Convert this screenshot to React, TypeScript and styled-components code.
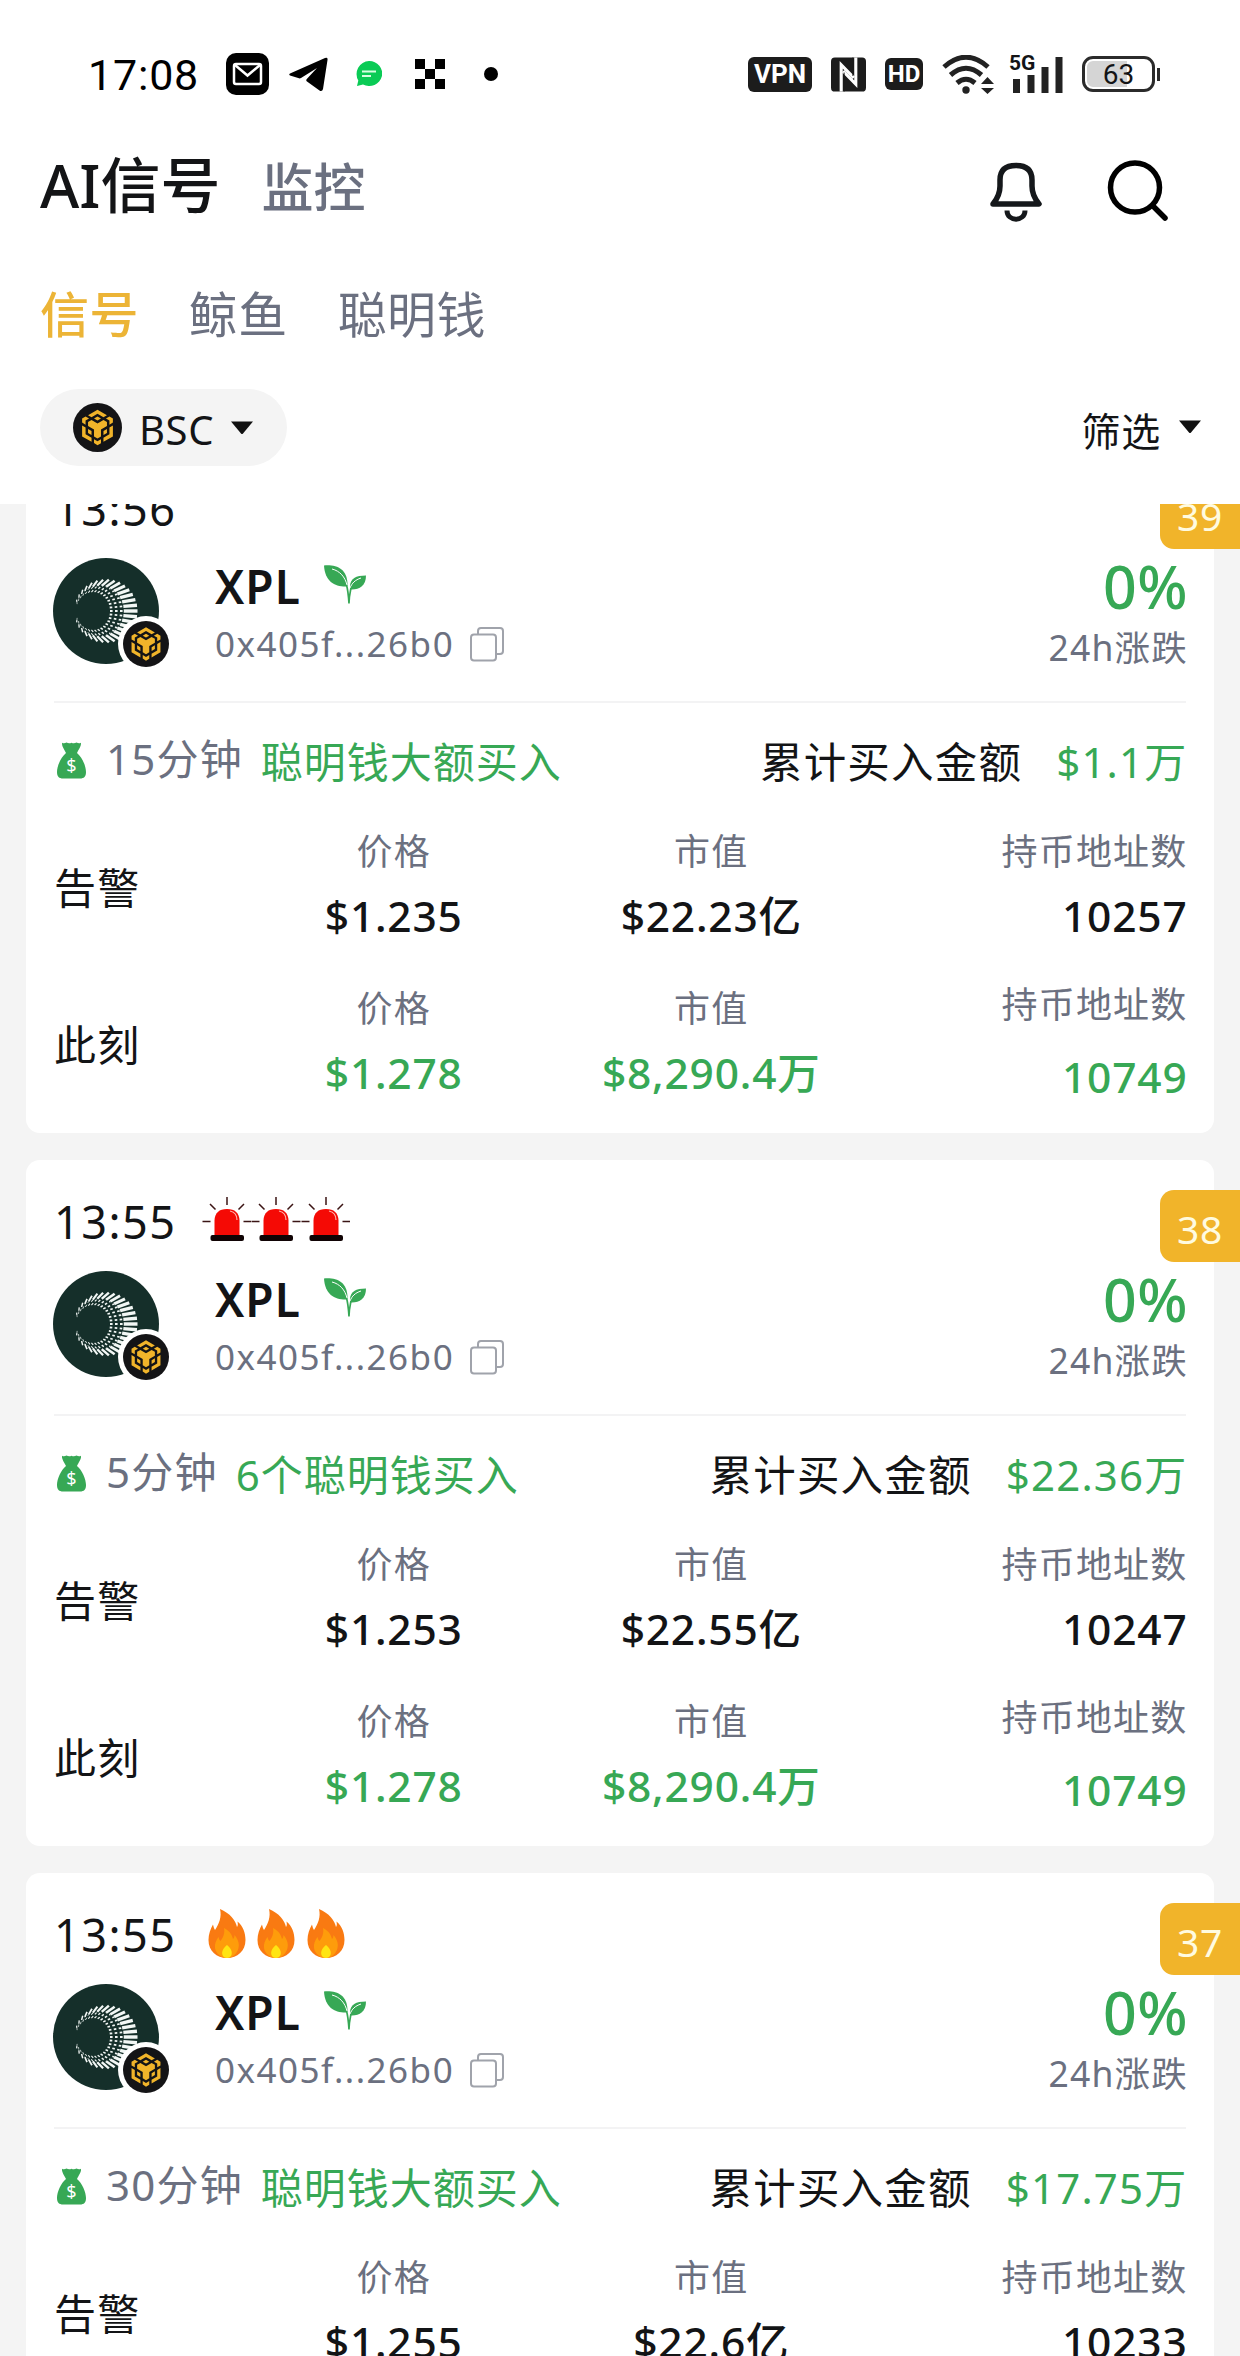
import styled, { createGlobalStyle } from 'styled-components';

const GlobalStyle = createGlobalStyle`
  * {
    box-sizing: border-box;
  }

  body {
    margin: 0;
    background: #fff;
    color: #131416;
    font-family: 'Noto Sans', 'Noto Sans CJK SC', sans-serif;
    letter-spacing: 1.2px;
  }
`;

const green = '#37a855';
const gray = '#6b7080';
const yellow = '#f1b42a';

const Screen = styled.div`
  display: flex;
  flex-direction: column;
  width: 1240px;
  height: 2356px;
  overflow: hidden;
`;

const StatusBar = styled.div`
  display: flex;
  justify-content: space-between;
  height: 150px;
  padding: 48px 80px 0 88px;
`;

const StatusGroup = styled.div`
  display: flex;
  align-items: center;
  height: 52px;
`;

const Clock = styled.span`
  width: 138px;
  padding-top: 2px;
  font-family: Roboto, sans-serif;
  font-size: 43px;
  line-height: 52px;
  letter-spacing: 0.8px;
  color: #000;
`;

const StatusIcon = styled.svg<{ $gap?: number }>`
  flex: none;
  margin-left: ${(props) => props.$gap ?? 0}px;
`;

const Tag = styled.span<{ $width: number; $height: number; $size: number; $gap?: number }>`
  display: flex;
  align-items: center;
  justify-content: center;
  width: ${(props) => props.$width}px;
  height: ${(props) => props.$height}px;
  margin-left: ${(props) => props.$gap ?? 0}px;
  border-radius: 6px;
  background: #1c1c1c;
  color: #fff;
  font-family: Roboto, sans-serif;
  font-size: ${(props) => props.$size}px;
  font-weight: 700;
  letter-spacing: 0;
`;

const Signal = styled.div`
  position: relative;
  width: 54px;
  height: 38px;
  margin-left: 14px;
`;

const SignalLabel = styled.span`
  position: absolute;
  top: -5px;
  left: 0;
  font-family: Roboto, sans-serif;
  font-size: 21px;
  font-weight: 700;
  line-height: 26px;
  letter-spacing: 0;
`;

const Battery = styled.div`
  display: flex;
  align-items: center;
  margin-left: 19px;
`;

const BatteryBody = styled.div`
  width: 73px;
  height: 36px;
  border: 3px solid #2b2b2b;
  border-radius: 11px;
  background: linear-gradient(90deg, #d5d5d5 63%, #fff 63%);
  box-shadow: inset 0 0 0 2px #fff;
  font-family: Roboto, sans-serif;
  font-size: 28px;
  line-height: 31px;
  letter-spacing: 0;
  text-align: center;
`;

const BatteryTip = styled.div`
  width: 3px;
  height: 13px;
  margin-left: 2px;
  background: #2b2b2b;
`;

const Header = styled.header`
  display: flex;
  justify-content: space-between;
  height: 120px;
  padding: 0 71px 0 40px;
`;

const Titles = styled.div`
  display: flex;
  gap: 41px;
`;

const Title = styled.h1<{ $active?: boolean }>`
  margin: 0;
  font-size: ${(props) => (props.$active ? 60 : 52)}px;
  font-weight: 500;
  line-height: ${(props) => (props.$active ? 71 : 73)}px;
  letter-spacing: 0;
  color: ${(props) => (props.$active ? '#131416' : gray)};
`;

const HeaderActions = styled.div`
  display: flex;
  align-items: flex-start;
  gap: 65px;
  padding-top: 10px;
`;

const Tabs = styled.nav`
  display: flex;
  gap: 50px;
  height: 119px;
  padding: 8px 40px 0;
`;

const Tab = styled.span<{ $active?: boolean }>`
  font-size: 49px;
  font-weight: ${(props) => (props.$active ? 500 : 400)};
  line-height: 72px;
  letter-spacing: 0.4px;
  color: ${(props) => (props.$active ? '#ecb436' : gray)};
`;

const Filters = styled.div`
  display: flex;
  justify-content: space-between;
  align-items: center;
  height: 77px;
  padding: 0 38px 0 40px;
  margin-bottom: 38px;
`;

const ChainChip = styled.div`
  display: flex;
  align-items: center;
  width: 247px;
  height: 77px;
  padding-left: 33px;
  border-radius: 39px;
  background: #f4f4f4;
  font-size: 40px;
  letter-spacing: 0.6px;
`;

const ChainName = styled.span`
  margin: 4px 16px 0 17px;
`;

const FilterButton = styled.div`
  display: flex;
  align-items: center;
  gap: 17px;
  padding-top: 2px;
  font-size: 39px;
  letter-spacing: 0.8px;

  svg {
    margin-top: -4px;
  }
`;

const List = styled.main`
  flex: 1;
  min-height: 0;
  overflow: hidden;
  background: #f4f4f4;
`;

/* the list is scrolled a little, so the first card starts above its edge */
const Scrolled = styled.div`
  display: flex;
  flex-direction: column;
  gap: 27px;
  margin-top: -57px;
  padding: 0 26px;
`;

const CardBox = styled.article`
  position: relative;
  flex: none;
  height: 686px;
  padding: 31px 28px 0;
  border-radius: 14px;
  background: #fff;
`;

const Rank = styled.div`
  position: absolute;
  top: 30px;
  right: -26px;
  width: 80px;
  height: 72px;
  border-radius: 14px 0 0 14px;
  background: ${yellow};
  color: #fffbe0;
  font-size: 39px;
  line-height: 77px;
  letter-spacing: 0.6px;
  text-align: center;
`;

const TimeRow = styled.div`
  display: flex;
  height: 60px;
  font-size: 45px;
  line-height: 61px;
  letter-spacing: 1.5px;
`;

const Emojis = styled.div`
  display: flex;
  margin: 5px 0 0 25px;
`;

const TokenRow = styled.div`
  display: flex;
  height: 165px;
  padding-top: 20px;
  border-bottom: 2px solid #f3f3f4;
`;

const Avatar = styled.div`
  position: relative;
  width: 106px;
  height: 106px;
  margin-left: -1px;
`;

const ChainBadge = styled.div`
  position: absolute;
  top: 58px;
  left: 65px;
  display: flex;
  padding: 5px;
  border-radius: 50%;
  background: #fff;
`;

const Names = styled.div`
  flex: 1;
  padding-left: 56px;
`;

const Symbol = styled.div`
  display: flex;
  gap: 23px;
  height: 56px;
  font-size: 46px;
  font-weight: 600;
  line-height: 57px;
  letter-spacing: 1px;

  svg {
    margin-top: 7px;
  }
`;

const Address = styled.div`
  display: flex;
  gap: 16px;
  margin-top: 8px;
  font-size: 35px;
  line-height: 44px;
  letter-spacing: 1.5px;
  color: ${gray};

  svg {
    margin-top: 5px;
  }
`;

/* pulled right by its own trailing letter spacing */
const Change = styled.div`
  margin: -4px -2px 0 0;
  text-align: right;
  color: ${gray};
  font-size: 35.5px;
  line-height: 45px;
`;

const Percent = styled.div`
  margin-bottom: 7px;
  color: ${green};
  font-size: 59px;
  font-weight: 500;
  line-height: 64px;
  letter-spacing: 0.5px;
`;

const AlertRow = styled.div`
  display: flex;
  height: 129px;
  padding-top: 31px;
  margin-right: -1.5px;
  font-size: 42px;
  line-height: 50px;

  svg {
    margin: 8px 0 0 3px;
  }
`;

const Period = styled.span`
  margin-left: 20px;
  color: ${gray};
`;

const AlertText = styled.span`
  flex: 1;
  margin-left: 18px;
  padding-top: 3px;
  letter-spacing: 1px;
  color: ${green};
`;

const AmountLabel = styled.span`
  padding-top: 3px;
  font-size: 42.5px;
`;

const Amount = styled.span`
  margin-left: 34px;
  padding-top: 3px;
  color: ${green};
`;

const Metrics = styled.div`
  display: grid;
  grid-template-columns: 181px repeat(3, 1fr);
  height: 157px;
  margin-right: -1.5px;
`;

const RowName = styled.div`
  height: 113px;
  font-size: 42px;
  line-height: 112px;
`;

const Metric = styled.div<{ $last?: boolean; $loose?: boolean }>`
  display: flex;
  flex-direction: column;
  gap: ${(props) => (props.$loose ? 25 : 17)}px;
  margin-top: ${(props) => (props.$loose ? -4 : 0)}px;
  text-align: ${(props) => (props.$last ? 'right' : 'center')};
`;

const MetricLabel = styled.span`
  color: ${gray};
  font-size: 36px;
  line-height: 40px;
`;

const MetricValue = styled.span<{ $up?: boolean }>`
  color: ${(props) => (props.$up ? green : '#131416')};
  font-size: 42.5px;
  font-weight: 500;
  line-height: 54px;
  letter-spacing: 0.8px;
`;

function ChainLogo({ size }: { size: number }) {
  return (
    <svg width={size} height={size} viewBox="-4.5 -4.5 33 33">
      <circle cx="12" cy="12" r="16.5" fill="#141416" />
      <path
        fill={yellow}
        d="M5.631 3.676 12.001 0l6.367 3.676-2.34 1.358L12 2.716 7.972 5.034l-2.34-1.358Zm12.737 4.636-2.34-1.358L12 9.272 7.972 6.954l-2.34 1.358v2.716l4.026 2.318v4.636L12 19.341l2.341-1.359v-4.636l4.027-2.318V8.312Zm0 7.352v-2.716l-2.34 1.358v2.716l2.34-1.358Zm1.663.96-4.027 2.318v2.716l6.368-3.676V10.63l-2.34 1.358v4.636Zm-2.34-10.63 2.34 1.358v2.716l2.341-1.358V5.994l-2.34-1.358-2.342 1.358Zm-8.034 13.694v2.716L12 24l2.341-1.359v-2.716L12 21.284l-2.342-1.359Zm-4.026-4.024 2.34 1.358v-2.716l-2.34-1.358v2.716Zm4.026-9.67L12 7.352l2.341-1.358L12 4.636 9.658 5.994Zm-5.69 1.358 2.341-1.358-2.34-1.358L1.628 5.994V8.71l2.34 1.358V7.352Zm0 4.636L1.628 10.63v7.352l6.367 3.676v-2.716l-4.026-2.318v-4.636Z"
      />
    </svg>
  );
}

const rayCount = 34;

/* rays run from a small inner circle to a bigger one, open on the left */
const rays = Array.from({ length: rayCount }, (_, i) => {
  const angle = (i / rayCount) * Math.PI * 2;
  const cos = Math.cos(angle);
  const sin = Math.sin(angle);
  const from = [40 + 17 * cos, 53 + 19 * sin];
  const to = [53 + 31.5 * cos, 53 + 31.5 * sin];
  const mid = [from[0] * 0.5 + to[0] * 0.5, from[1] * 0.5 + to[1] * 0.5];
  return { from, mid, to, cos, weight: 2 + cos };
}).filter((ray) => ray.cos > -0.95);

function TokenLogo() {
  return (
    <svg width="106" height="106" viewBox="0 0 106 106">
      <circle cx="53" cy="53" r="53" fill="#152f2a" />
      {rays.map(({ from, mid, to, weight }, i) => (
        <g key={i} stroke="#f2f7f5">
          <path
            d={`M${from[0]} ${from[1]}L${mid[0]} ${mid[1]}`}
            strokeWidth={weight * 0.6}
            strokeDasharray="2.6 2.4"
          />
          <path d={`M${mid[0]} ${mid[1]}L${to[0]} ${to[1]}`} strokeWidth={weight * 1.15} />
        </g>
      ))}
    </svg>
  );
}

function Caret({ width }: { width: number }) {
  return (
    <svg width={width} height="14" viewBox="0 0 24 14" preserveAspectRatio="none">
      <path d="M1 .5h22L13 12.6q-1 1-2 0z" fill="#111" />
    </svg>
  );
}

function Leaf() {
  return (
    <svg width="42" height="39" viewBox="0 0 42 39">
      <path
        d="M0 0.5C13-.5 23 4 23.5 19c0 1-.2 2-.5 2.5C11 22 1 17 0 .5z"
        fill={green}
      />
      <path d="M42 10.500c-10 0-16 3-16 11 0 1 0 2 .5 3C35 25 42 21 42 10.500z" fill={green} />
      <path d="M8 4c8 2 13 8 15 16M37 13c-6 2-9 5-11 10" stroke="#fff" strokeWidth="1" fill="none" />
      <path d="M22.500 20c1.500 5 2 11 2.500 18.500M27 23c-1 5-2 9-2 15" stroke={green} strokeWidth="1.700" fill="none" />
    </svg>
  );
}

function CopyIcon() {
  return (
    <svg width="34" height="35" viewBox="0 0 34 35" fill="none" stroke="#a0a3ab" strokeWidth="2">
      <rect x="1" y="7.500" width="25" height="26" rx="3" />
      <path d="M8 7V4q0-3 3-3h19q3 0 3 3v20q0 3-3 3h-3" />
    </svg>
  );
}

function MoneyBag() {
  return (
    <svg width="29" height="37" viewBox="0 0 29 37">
      <path
        d="M5 .8Q7 2 9.500.6 12 2 14.500.8 17 2 19.500.6 22 2 24 .8c.6 3-2.500 7-4 10.200C25 15 29 24 29 30c0 4.500-2 6.500-6 6.500H6c-4 0-6-2-6-6.500 0-6 4-15 9-19C7.500 8 4.500 4 5 .8z"
        fill={green}
      />
      <text
        x="14.5"
        y="30"
        fill="#fff"
        fontFamily="Noto Sans"
        fontSize="18"
        letterSpacing="0"
        textAnchor="middle"
      >
        $
      </text>
    </svg>
  );
}

function Siren() {
  return (
    <svg width="49.5" height="50" viewBox="0 0 49.5 50">
      <path
        d="M25 1v8M8 8l5.500 5.500M42 8l-5.500 5.500M.5 25.500h8M41.500 25.500h8"
        stroke="#3b1414"
        strokeWidth="1.500"
      />
      <path d="M12.500 40V24.500Q13 13 25 13t12.500 11.500V40z" fill="#f50a05" />
      <path d="M28 15q7 1.500 7 9" stroke="#ffb3ab" strokeWidth="1.200" fill="none" />
      <rect x="8.500" y="39" width="33.500" height="6" rx="2" fill="#100304" />
    </svg>
  );
}

function Fire() {
  return (
    <svg width="49.7" height="50" viewBox="0 0 49.700 50">
      <path
        d="M18 0c10 4 16 12 17 18 1-1 1-3 .5-5.500C41 17 43.500 24 43.500 31c0 11-8 18-18.500 18S6.500 42 6.500 31c0-6 2-11 4.500-15.500.5 2 1 4 2 5.500C17 15 20 8 18 0z"
        fill="#f97a12"
      />
      <path
        d="M22 19c6 3 8 7 9 11 1-1 1.500-2.500 1.500-4 4 5 5 9 4 13-1.500 6-6 10-11.500 10s-11-4-12-10c-.5-4 1-8 3.500-11 .5 2 1 3 2 4 3-4 4.500-8 3.500-13z"
        fill="#fe9c0b"
      />
      <path d="M25 36c4 3 5.500 7 4.500 10-.8 2-2.500 3-4.500 3s-4-1-4.500-3c-1-3 .5-7 4.500-10z" fill="#ffe512" />
    </svg>
  );
}

interface SignalItem {
  rank: number;
  time: string;
  emoji?: 'siren' | 'fire';
  period: string;
  text: string;
  amount: string;
  price: string;
  cap: string;
  holders: string;
}

const signals: SignalItem[] = [
  {
    rank: 39,
    time: '13:56',
    period: '15分钟',
    text: '聪明钱大额买入',
    amount: '$1.1万',
    price: '$1.235',
    cap: '$22.23亿',
    holders: '10257',
  },
  {
    rank: 38,
    time: '13:55',
    emoji: 'siren',
    period: '5分钟',
    text: '6个聪明钱买入',
    amount: '$22.36万',
    price: '$1.253',
    cap: '$22.55亿',
    holders: '10247',
  },
  {
    rank: 37,
    time: '13:55',
    emoji: 'fire',
    period: '30分钟',
    text: '聪明钱大额买入',
    amount: '$17.75万',
    price: '$1.255',
    cap: '$22.6亿',
    holders: '10233',
  },
];

interface MetricsRowProps {
  name: string;
  price: string;
  cap: string;
  holders: string;
  now?: boolean;
}

function MetricsRow({ name, price, cap, holders, now }: MetricsRowProps) {
  return (
    <Metrics>
      <RowName>{name}</RowName>
      <Metric>
        <MetricLabel>价格</MetricLabel>
        <MetricValue $up={now}>{price}</MetricValue>
      </Metric>
      <Metric>
        <MetricLabel>市值</MetricLabel>
        <MetricValue $up={now}>{cap}</MetricValue>
      </Metric>
      <Metric $last $loose={now}>
        <MetricLabel>持币地址数</MetricLabel>
        <MetricValue $up={now}>{holders}</MetricValue>
      </Metric>
    </Metrics>
  );
}

function SignalCard({ item }: { item: SignalItem }) {
  const Emoji = item.emoji === 'siren' ? Siren : Fire;

  return (
    <CardBox>
      <Rank>{item.rank}</Rank>
      <TimeRow>
        <span>{item.time}</span>
        {item.emoji && (
          <Emojis>
            <Emoji />
            <Emoji />
            <Emoji />
          </Emojis>
        )}
      </TimeRow>
      <TokenRow>
        <Avatar>
          <TokenLogo />
          <ChainBadge>
            <ChainLogo size={46} />
          </ChainBadge>
        </Avatar>
        <Names>
          <Symbol>
            XPL
            <Leaf />
          </Symbol>
          <Address>
            0x405f...26b0
            <CopyIcon />
          </Address>
        </Names>
        <Change>
          <Percent>0%</Percent>
          24h涨跌
        </Change>
      </TokenRow>
      <AlertRow>
        <MoneyBag />
        <Period>{item.period}</Period>
        <AlertText>{item.text}</AlertText>
        <AmountLabel>累计买入金额</AmountLabel>
        <Amount>{item.amount}</Amount>
      </AlertRow>
      <MetricsRow name="告警" price={item.price} cap={item.cap} holders={item.holders} />
      <MetricsRow name="此刻" price="$1.278" cap="$8,290.4万" holders="10749" now />
    </CardBox>
  );
}

function App() {
  return (
    <Screen>
      <GlobalStyle />
      <StatusBar>
        <StatusGroup>
          <Clock>17:08</Clock>
          <StatusIcon width="43" height="42" viewBox="0 0 43 42">
            <rect width="43" height="42" rx="10" />
            <rect x="8" y="11" width="27" height="20" rx="2" fill="none" stroke="#fff" strokeWidth="2.500" />
            <path d="M9 12l12.500 10.500L34 12" fill="none" stroke="#fff" strokeWidth="2.500" />
          </StatusIcon>
          <StatusIcon $gap={20} width="39" height="35" viewBox="0 0 39 35">
            <path d="M1 16.500 36 1q3-1 2.500 2L34 32q-.8 3-3.500 1.500L18 24.500q-1.500-1.200 0-2.800L28 11 12 21q-1 .6-2 .3L1 18.500q-1.500-1 0-2z" />
          </StatusIcon>
          <StatusIcon $gap={28} width="26" height="26" viewBox="0 0 26 26">
            <path d="M13 0a13 12.500 0 1 1-6 23.500L1 25l1.300-5.500A13 13 0 0 1 13 0z" fill="#0acb55" />
            <path d="M6 10.500h14M6 15h9" stroke="#d7ffe2" strokeWidth="1.800" />
          </StatusIcon>
          <StatusIcon $gap={33} width="30" height="30" viewBox="0 0 30 30">
            <path d="M0 0h10v10h10V0h10v10H20v10h10v10H20V20H10v10H0V20h10V10H0z" />
          </StatusIcon>
          <StatusIcon $gap={39} width="14" height="14" viewBox="0 0 14 14">
            <circle cx="7" cy="7" r="7" />
          </StatusIcon>
        </StatusGroup>
        <StatusGroup>
          <Tag $width={64} $height={35} $size={26}>
            VPN
          </Tag>
          <StatusIcon $gap={19} width="35" height="35" viewBox="0 0 36 35">
            <rect width="36" height="35" rx="4" fill="#1c1c1c" />
            <path d="M10.500 35V7.500L23.500 21" fill="none" stroke="#fff" strokeWidth="3.200" />
            <path d="M25.500 0v27.500L12.500 14" fill="none" stroke="#fff" strokeWidth="3.200" />
            <path d="M13.500 15.500v19.500M22.500 0v19" stroke="#1c1c1c" strokeWidth="1" />
          </StatusIcon>
          <Tag $width={38} $height={32} $size={24} $gap={19}>
            HD
          </Tag>
          <StatusIcon $gap={19} width="53" height="39" viewBox="0 0 53 39">
            <g fill="none" stroke="#222" strokeWidth="5">
              <path d="M2 12Q24-7.500 46 12" />
              <path d="M8.500 20Q24 6.500 39.500 20" />
              <path d="M15 28Q24 20.500 33 28" />
            </g>
            <circle cx="24" cy="35" r="3.700" fill="#222" />
            <path d="M45.500 22l6.500 7H39zM45.500 39l6.500-6H39z" fill="#222" />
          </StatusIcon>
          <Signal>
            <SignalLabel>5G</SignalLabel>
            <svg width="54" height="38" viewBox="0 0 54 38">
              <path d="M4 24h7v14H4zM18.500 20h7v18h-7zM32.500 12h7v26h-7zM46.500 2h7v36h-7z" fill="#222" />
            </svg>
          </Signal>
          <Battery>
            <BatteryBody>63</BatteryBody>
            <BatteryTip />
          </Battery>
        </StatusGroup>
      </StatusBar>
      <Header>
        <Titles>
          <Title $active>AI信号</Title>
          <Title>监控</Title>
        </Titles>
        <HeaderActions>
          <svg width="52" height="62" viewBox="0 0 52 62" fill="none" stroke="#15181b" strokeWidth="5.500">
            <path d="M3 44C8 38 10 33 10 26v-6C10 10 16 5.500 26 5.500S42 10 42 20v6c0 7 2 12 7 18z" strokeLinejoin="round" />
            <path d="M17 50.500c0 11.500 18 11.500 18 0" strokeWidth="5" />
          </svg>
          <svg width="62" height="62" viewBox="0 0 62 62" fill="none" stroke="#000" strokeWidth="5.500">
            <circle cx="28" cy="27.500" r="24.500" />
            <path d="M46 46l12 12" strokeLinecap="round" />
          </svg>
        </HeaderActions>
      </Header>
      <Tabs>
        <Tab $active>信号</Tab>
        <Tab>鲸鱼</Tab>
        <Tab>聪明钱</Tab>
      </Tabs>
      <Filters>
        <ChainChip>
          <ChainLogo size={49} />
          <ChainName>BSC</ChainName>
          <Caret width={24} />
        </ChainChip>
        <FilterButton>
          筛选
          <Caret width={24} />
        </FilterButton>
      </Filters>
      <List>
        <Scrolled>
          {signals.map((item) => (
            <SignalCard key={item.rank} item={item} />
          ))}
        </Scrolled>
      </List>
    </Screen>
  );
}

export default App;
